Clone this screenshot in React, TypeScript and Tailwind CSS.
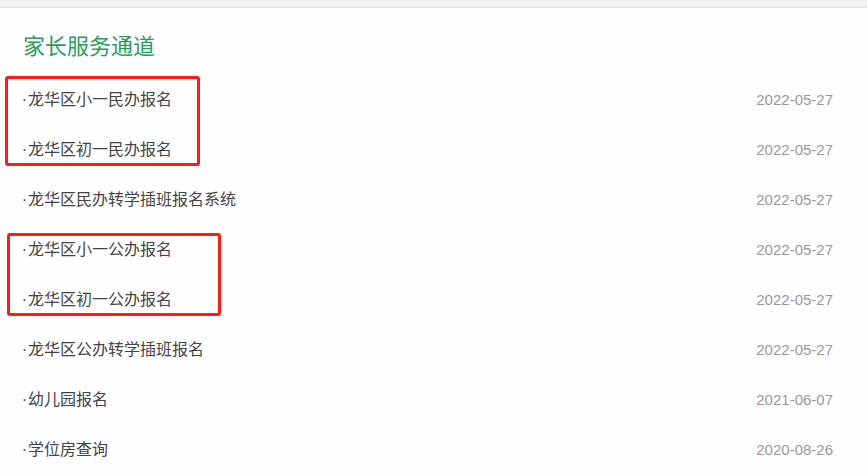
import React from "react";

const items: { title: string; date: string }[] = [
  { title: "龙华区小一民办报名", date: "2022-05-27" },
  { title: "龙华区初一民办报名", date: "2022-05-27" },
  { title: "龙华区民办转学插班报名系统", date: "2022-05-27" },
  { title: "龙华区小一公办报名", date: "2022-05-27" },
  { title: "龙华区初一公办报名", date: "2022-05-27" },
  { title: "龙华区公办转学插班报名", date: "2022-05-27" },
  { title: "幼儿园报名", date: "2021-06-07" },
  { title: "学位房查询", date: "2020-08-26" },
];

export default function App() {
  return (
    <div
      className="relative w-[867px] h-[476px] overflow-hidden bg-[#fefeff]"
      style={{ fontFamily: '"Liberation Sans", "Noto Sans CJK SC", sans-serif' }}
    >
      <div className="h-[8px] bg-[#f2f2f4] border-b border-[#dcdcde]" />
      <div className="pl-[23px] pr-[34px]">
        <h2 className="mt-[24px] h-[30px] leading-[30px] text-[22px] text-[#2a9d5c] font-normal">
          家长服务通道
        </h2>
        <ul className="mt-[13px]">
          {items.map((it, i) => (
            <li key={i} className="h-[50px] flex items-center justify-between">
              <div className="flex items-center text-[16px] text-[#444444] -ml-[2px]">
                <span className="w-[7px] text-center">·</span>
                <span>{it.title}</span>
              </div>
              <span className="text-[15px] text-[#999999]">{it.date}</span>
            </li>
          ))}
        </ul>
      </div>
      <div className="absolute left-[5px] top-[76px] w-[195px] h-[90px] border-[3px] border-[#ff1a12] rounded-[3px]" />
      <div className="absolute left-[7px] top-[233px] w-[214px] h-[83px] border-[3px] border-[#ff1a12] rounded-[3px]" />
    </div>
  );
}
